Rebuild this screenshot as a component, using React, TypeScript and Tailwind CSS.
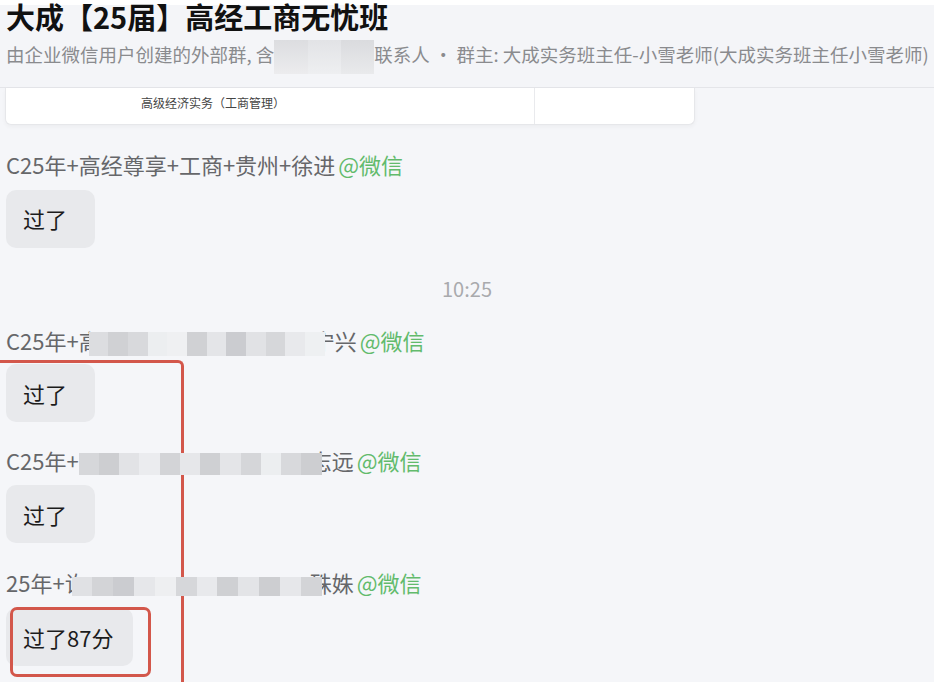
import React from "react";

const cjk = "font-['Noto_Sans_CJK_SC','Noto_Sans',sans-serif]";

// mosaic used to hide names in the chat
const Mosaic = ({ tiles, className }: { tiles: string[]; className: string }) => (
  <span className={`relative z-10 inline-flex align-middle ${className}`}>
    {tiles.map((c, i) => (
      <span key={i} className="h-full flex-1" style={{ background: c }} />
    ))}
  </span>
);

const tilesA = ["#dcdde0", "#d0d1d4", "#d8d9dc", "#eceef0", "#eff0f2", "#d0d1d4", "#e4e5e8", "#cbccd0", "#e1e2e5", "#d6d7da", "#e8e9ec", "#eef0f2"];
const tilesB = ["#d6d7da", "#cdced1", "#e2e3e6", "#ebecef", "#d3d4d7", "#e6e7ea", "#cfd0d3", "#e4e5e8", "#d5d6d9", "#eceef0", "#d8d9dc", "#cdced1"];
const tilesC = ["#e0e1e4", "#d3d4d7", "#cbccd0", "#e6e7ea", "#eeeff1", "#d6d7da", "#e8e9ec", "#cfd0d3", "#e3e4e7", "#cdced1", "#e6e7ea", "#d3d4d7"];

const Bubble = ({ text, className = "" }: { text: string; className?: string }) => (
  <div className={`inline-flex h-[58px] min-w-[89px] items-center rounded-[10px] bg-[#e8e9ec] pl-[17px] pr-[20px] text-[22px] text-[#1c1c1c] ${className}`}>
    {text}
  </div>
);

const Wx = () => <span className="ml-[3px] text-[#62bb6c]">@微信</span>;

export default function App() {
  return (
    <div className={`relative h-[682px] w-[934px] overflow-hidden bg-[#f5f6f9] ${cjk}`}>
      {/* header */}
      <div className="border-b border-[#e4e5e9] bg-[linear-gradient(to_bottom,#ffffff_5px,#f4f5f8_5px)] px-[6px] pb-[19px]">
        <div className="whitespace-nowrap text-[29px] font-bold leading-[32px] text-[#111]">大成【25届】高经工商无忧班</div>
        <div className="mt-[10px] whitespace-nowrap text-[18.5px] leading-[24px] text-[#8a8b8e]">
          由企业微信用户创建的外部群, 含
          <span className="-my-[6px] inline-flex h-[34px] w-[100px] align-middle">
            <span className="h-full flex-1 bg-[linear-gradient(to_bottom,#dcdde0,#ececee)]" />
            <span className="h-full flex-1 bg-[linear-gradient(to_bottom,#e2e3e6,#eeeff1)]" />
            <span className="h-full flex-1 bg-[linear-gradient(to_bottom,#dadbde,#e9eaec)]" />
          </span>
          联系人 · 群主: 大成实务班主任-小雪老师(大成实务班主任小雪老师)
        </div>
      </div>

      {/* card fragment */}
      <div className="ml-[5px] flex h-[37px] w-[690px] rounded-b-[6px] border border-t-0 border-[#e6e7ea] bg-white shadow-[0_2px_4px_rgba(0,0,0,0.04)]">
        <div className="flex w-[529px] items-center border-r border-[#e9eaed] pb-[5px] pl-[135px] text-[12px] text-[#444]">
          高级经济实务（工商管理）
        </div>
        <div className="flex-1" />
      </div>

      {/* messages */}
      <div className="px-[6px] text-[22px] text-[#66676a]">
        <div className="mt-[25px] whitespace-nowrap leading-[28px]">
          C25年+高经尊享+工商+贵州+徐进<Wx />
        </div>
        <Bubble text="过了" className="mt-[12px]" />

        <div className="mt-[27px] text-center text-[20px] leading-[28px] text-[#a9aaad]">10:25</div>

        <div className="mt-[23px] whitespace-nowrap leading-[28px]">
          C25年+高<Mosaic tiles={tilesA} className="-my-[2px] -ml-[12px] -mr-[12px] h-[24px] w-[236px]" />宁兴<Wx />
        </div>
        <Bubble text="过了" className="mt-[10px]" />

        <div className="mt-[24px] whitespace-nowrap leading-[28px]">
          C25年+<Mosaic tiles={tilesB} className="-mr-[12px] h-[22px] w-[243px]" />志远<Wx />
        </div>
        <Bubble text="过了" className="mt-[10px]" />

        <div className="mt-[25px] whitespace-nowrap leading-[28px]">
          25年+许<Mosaic tiles={tilesC} className="-ml-[15px] -mr-[12px] h-[19px] w-[250px]" />殊姝<Wx />
        </div>
        <Bubble text="过了87分" className="mt-[12px]" />
      </div>

      {/* red annotations */}
      <div className="absolute left-0 top-[360px] h-[340px] w-[184px] rounded-tr-[6px] border-r-[3px] border-t-[3px] border-[#d3574b]" />
      <div className="absolute left-[10px] top-[607px] h-[70px] w-[141px] rounded-[7px] border-[3px] border-[#d3574b]" />
    </div>
  );
}
